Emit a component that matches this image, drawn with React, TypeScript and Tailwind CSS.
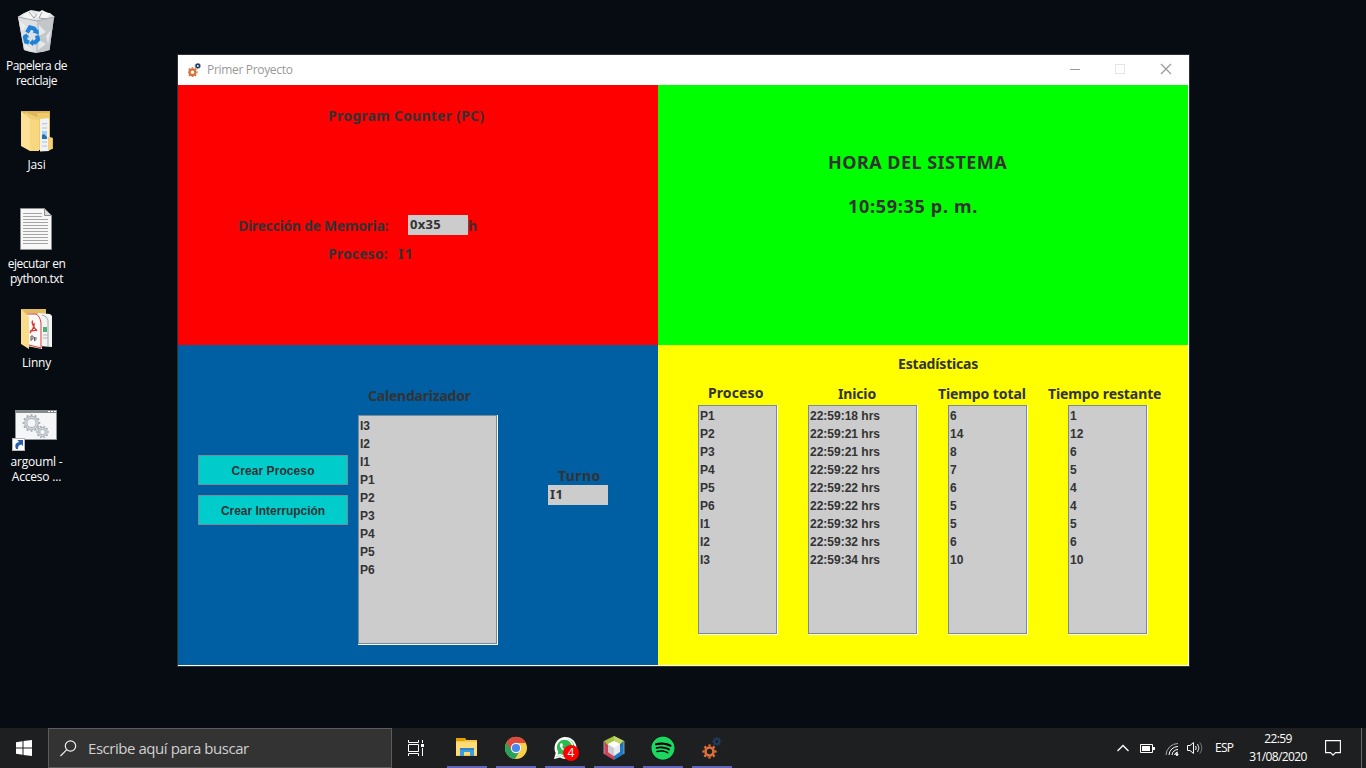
import React from "react";
import { FaSpotify, FaWhatsapp } from "react-icons/fa";

type GearProps = { cx: number; cy: number; r: number; color: string; teeth?: number; ring?: number; tooth?: number };

function Gear({ cx, cy, r, color, teeth = 8, ring = 2, tooth = 1.6 }: GearProps) {
  const unit = 100 / teeth / 2;
  return (
    <g fill="none" stroke={color}>
      <circle cx={cx} cy={cy} r={r} strokeWidth={ring} />
      <circle
        cx={cx}
        cy={cy}
        r={r + ring / 2 + tooth / 2 - 0.2}
        strokeWidth={tooth}
        pathLength={100}
        strokeDasharray={`${unit} ${unit}`}
        strokeDashoffset={unit / 2}
      />
    </g>
  );
}

function RecycleBin() {
  return (
    <svg width="48" height="48" viewBox="0 0 48 48">
      <path d="M6 9 L42 9 L37.500 42 Q24 47 12 42Z" fill="#c9cccf" />
      <path d="M5.500 9 L12 5 L19 2 L30 4 L38 5 L43 9 L36 13 L12 12Z" fill="#e3e5e6" />
      <path d="M6 9 L25 13 L24 45 L12 42Z" fill="#dddfe1" />
      <path d="M25 13 L42 9 L37.500 42 L24 45Z" fill="#c4c7ca" />
      <path d="M10 8l7-5 6 4 7-5 8 4-5 6-9-3-8 3z" fill="#f5f5f5" />
      <path d="M17 4l5 6 3-4M30 4l-3 6 8 1" stroke="#999da1" fill="none" />
      <path d="M27 17l7 7-7 4zM34 28l5-6-3 14zM27 32l7 4-8 6zM8 13l6 5-4 6zM12 36l9 6-8-1z" fill="#eef0f1" opacity=".8" />
      <path d="M6 9l19 4 17-4" stroke="#a8acb0" fill="none" />
      <g transform="translate(0 -1.500)">
        <g fill="none" stroke="#1c83d8" strokeWidth="4.200">
          <path d="M15 26l3-5 4 1 2 3" />
          <path d="M25 29l1 4-3 3h-3" />
          <path d="M17 36l-3-1-1-4 1-2" />
        </g>
        <path d="M20.500 26l6-3 .5 5zM21 32.500v7l-4-3zM10.500 30l4-3 3 4z" fill="#1c83d8" />
      </g>
    </svg>
  );
}

function FolderIcon() {
  return (
    <svg width="48" height="48" viewBox="0 0 48 48">
      <path d="M9 4H38V30l3 1V42H31z" fill="#dcb658" />
      <path d="M25 6H37V43H27z" fill="#f0c968" />
      <path d="M28 12l9-1v33l-9 .5z" fill="#eef2f5" />
      <path d="M30 17l5-.5M30 21h5M30 35h5M30 39h5" stroke="#b6c0c8" />
      <path d="M30 24h5v8h-5z" fill="#a6d0ec" />
      <path d="M30 28l2-1 3 3v2h-5z" fill="#246fae" />
      <path d="M13 5l14 6v33l-14-3z" fill="#f0ce76" />
      <path d="M36 30l4 1v11l-4 2z" fill="#f3cf78" />
      <path d="M9 4l9 8v32L9 39z" fill="#ffe196" />
      <path d="M18 12l9 1v31l-9 0z" fill="#f8d781" />
    </svg>
  );
}

function PdfFolder() {
  return (
    <svg width="48" height="48" viewBox="0 0 48 48">
      <path d="M9 4H34V36L9 39z" fill="#dfbc61" />
      <path d="M26 8l12 1 2 2v31l-13-1z" fill="#f2f3f3" />
      <path d="M30 10q5 1 6 5v26" stroke="#a8a9a3" fill="none" />
      <path d="M31 22h4v5h-4z" fill="#4bb078" />
      <path d="M31 30h5M31 33h5" stroke="#b6b6b6" />
      <path d="M15 8l11 1 4 8v27l-15-3z" fill="#fafafa" />
      <path d="M15 9h9q4 2 5 9v25l-12-3" stroke="#db3a32" fill="none" />
      <path d="M21 16c-2 0 0 6 4 10M22 18c1 4-2 7-4 10M18 26l7-1" stroke="#db3a32" strokeWidth="1.400" fill="none" />
      <path d="M19 31v5M19 31h2v3h-2M22.500 32v4q2-1 1.500-4" stroke="#5b5b5b" fill="none" />
      <path d="M9 4l8 8v32L9 39z" fill="#fbdc8b" />
    </svg>
  );
}

function TextFile() {
  return (
    <svg width="48" height="48" viewBox="0 0 48 48">
      <path d="M8.500 2.500h24l7 7v34h-31z" fill="#f7f7f7" stroke="#8d8d8d" />
      <path d="M32.500 2.500v7h7z" fill="#dadada" stroke="#8d8d8d" />
      <path d="M11 7.500h19M11 10.500h19M11 13.500h25M11 16.500h25M11 19.500h25M11 22.500h25M11 25.500h25M11 28.500h25M11 31.500h25M11 34.500h25M11 37.500h25" stroke="#a5a5a5" />
    </svg>
  );
}

function ShortcutIcon() {
  return (
    <svg width="48" height="48" viewBox="0 0 48 48">
      <rect x="3.500" y="6.500" width="41" height="29" fill="#f5f6f7" stroke="#8e9294" />
      <path d="M3 7.500h42" stroke="#858a8d" strokeWidth="3" />
      <path d="M36 7.500h2M39 7.500h2M42 7.500h2" stroke="#fff" />
      <Gear cx={19.5} cy={19} r={5.7} color="#a7aeb4" teeth={12} ring={3.2} tooth={1.7} />
      <Gear cx={30.500} cy={28} r={3.7} color="#a7aeb4" teeth={10} ring={2.8} tooth={1.4} />
      <circle cx="19.500" cy="19" r="5.700" fill="none" stroke="#d2d7db" strokeWidth="1.500" />
      <circle cx="30.500" cy="28" r="3.700" fill="none" stroke="#d2d7db" strokeWidth="1.300" />
      <rect x=".5" y="34.500" width="12" height="12" fill="#fff" stroke="#b7b7b7" />
      <path d="M4 45c-1.500-4-.5-6 3-7l-1.500-2H11v6l-1.500-1.500C7 41 6 42 6 45z" fill="#285fa8" />
    </svg>
  );
}

const desktopItems = [
  { icon: <RecycleBin />, lines: ["Papelera de", "reciclaje"], spacing: "tracking-[-0.5px]" },
  { icon: <FolderIcon />, lines: ["Jasi"], spacing: "tracking-[-0.1px]" },
  { icon: <TextFile />, lines: ["ejecutar en", "python.txt"], spacing: "tracking-[-0.45px]" },
  { icon: <PdfFolder />, lines: ["Linny"], spacing: "tracking-[-0.2px]" },
  { icon: <ShortcutIcon />, lines: ["argouml -", "Acceso ..."], spacing: "tracking-[-0.2px]" },
];

function Label({ children, className }: { children: React.ReactNode; className: string }) {
  return <div className={`whitespace-nowrap font-['Noto_Sans',sans-serif] font-bold text-[#333] ${className}`}>{children}</div>;
}

function ListBox({ items, className }: { items: string[]; className: string }) {
  return (
    <div className={`border-b border-r border-white ${className}`}>
      <div className="h-full border border-[#7a8a99] bg-[#ccc] pl-px pt-px">
        {items.map((t, i) => (
          <div key={i} className="h-[18px] whitespace-nowrap text-[12px] font-bold leading-[18px] text-[#333]">{t}</div>
        ))}
      </div>
    </div>
  );
}

const columns = [
  { title: "Proceso", head: "pl-[10px] -mt-px mb-px tracking-[0.1px]", box: "w-[80px]", gap: "w-[110px]", items: ["P1", "P2", "P3", "P4", "P5", "P6", "I1", "I2", "I3"] },
  { title: "Inicio", head: "pl-[30px] tracking-[-0.15px]", box: "w-[110px]", gap: "w-[140px]", items: ["22:59:18 hrs", "22:59:21 hrs", "22:59:21 hrs", "22:59:22 hrs", "22:59:22 hrs", "22:59:22 hrs", "22:59:32 hrs", "22:59:32 hrs", "22:59:34 hrs"] },
  { title: "Tiempo total", head: "-ml-[10px] tracking-[-0.1px]", box: "w-[80px]", gap: "w-[120px]", items: ["6", "14", "8", "7", "6", "5", "5", "6", "10"] },
  { title: "Tiempo restante", head: "-ml-[20px] tracking-[-0.1px]", box: "w-[80px]", gap: "w-[80px]", items: ["1", "12", "6", "5", "4", "4", "5", "6", "10"] },
];

function AppWindow() {
  return (
    <main className="flex h-[613px] w-[1013px] flex-col border border-[#2d3035] bg-white">
      <header className="flex h-[30px] shrink-0 items-center pl-[10px] pr-[17px]">
        <svg className="-mt-px" width="14" height="14" viewBox="0 0 14 14">
          <Gear cx={4.5} cy={9.3} r={2.9} color="#d9713a" ring={2.2} tooth={1.3} />
          <Gear cx={9.8} cy={2.9} r={1.7} color="#1c355e" ring={1.5} tooth={0.9} />
        </svg>
        <div className="-mt-px ml-[5px] whitespace-nowrap font-['Open_Sans',sans-serif] text-[12px] tracking-[-0.32px] text-[#999]">Primer Proyecto</div>
        <svg className="-mt-[2px] ml-auto" width="102" height="12" viewBox="0 0 102 12">
          <path d="M0 6.500h10" stroke="#999" />
          <rect x="45.500" y="1.500" width="9" height="9" fill="none" stroke="#e5e5e5" />
          <path d="M91 1l10 10M101 1L91 11" stroke="#999" strokeWidth="1.200" />
        </svg>
      </header>
      <div className="grid h-[580px] w-[1010px] grid-cols-[480px_530px] grid-rows-[260px_320px]">
        <section className="bg-[#f00] pt-[21px]">
          <Label className="pl-[150px] text-[14px] leading-[20px] tracking-[0.24px]">Program Counter (PC)</Label>
          <div className="mt-[89px] flex h-[20px]">
            <Label className="w-[170px] shrink-0 pl-[60px] pt-px text-[14px] leading-[20px] tracking-[-0.3px]">Dirección de Memoria:</Label>
            <Label className="ml-[60px] w-[60px] bg-[#ccc] pl-[2px] text-[13px] leading-[19px] tracking-[0.3px]">0x35</Label>
            <Label className="pt-px text-[14px] leading-[20px]">h</Label>
          </div>
          <div className="mt-[9px] flex pl-[150px]">
            <Label className="w-[70px] text-[14px] leading-[20px] tracking-[0.12px]">Proceso:</Label>
            <Label className="text-[14px] leading-[20px] tracking-[1px]">I1</Label>
          </div>
        </section>
        <section className="bg-[#0f0] pt-[65px]">
          <Label className="pl-[170px] text-[18px] leading-[24px] tracking-[0.47px]">HORA DEL SISTEMA</Label>
          <Label className="mt-[20px] pl-[190px] text-[18px] leading-[24px] tracking-[0.7px]">10:59:35 p. m.</Label>
        </section>
        <section className="flex bg-[#005fa3]">
          <div className="flex w-[180px] flex-col gap-[10px] pl-[20px] pt-[110px]">
            <button className="h-[30px] w-[150px] border border-[#7a8a99] bg-[#0cc] pt-[2px] text-[12px] font-bold tracking-[0.08px] text-[#333]">Crear Proceso</button>
            <button className="h-[30px] w-[150px] border border-[#7a8a99] bg-[#0cc] pt-[2px] text-[12px] font-bold tracking-[-0.03px] text-[#333]">Crear Interrupción</button>
          </div>
          <div className="w-[140px] pt-[41px]">
            <Label className="pl-[10px] text-[14px] leading-[20px] tracking-[-0.22px]">Calendarizador</Label>
            <ListBox items={["I3", "I2", "I1", "P1", "P2", "P3", "P4", "P5", "P6"]} className="mt-[9px] h-[230px] w-[140px]" />
          </div>
          <div className="pl-[50px] pt-[121px]">
            <Label className="pl-[10px] text-[14px] leading-[19px] tracking-[0.4px]">Turno</Label>
            <Label className="h-[20px] w-[60px] bg-[#ccc] pl-[2px] text-[13px] leading-[19px] tracking-[0.5px]">I1</Label>
          </div>
        </section>
        <section className="bg-[#ff0] pl-[40px] pt-[9px]">
          <Label className="pl-[200px] text-[14px] leading-[20px] tracking-[-0.18px]">Estadísticas</Label>
          <div className="mt-[9px] flex">
            {columns.map((c) => (
              <div key={c.title} className={c.gap}>
                <Label className={`h-[22px] text-[14px] leading-[21px] ${c.head}`}>{c.title}</Label>
                <ListBox items={c.items} className={`h-[230px] ${c.box}`} />
              </div>
            ))}
          </div>
        </section>
      </div>
    </main>
  );
}

function ExplorerIcon() {
  return (
    <svg width="24" height="24" viewBox="0 0 24 24">
      <path d="M1 2h9l1 2h11v16H1z" fill="#f7c64a" />
      <path d="M1 2h9l1 2-2 1H1z" fill="#e5a100" />
      <path d="M1 6h21v13H1z" fill="#ffdc78" />
      <path d="M5 12h14v8h-4v-4H9v4H5z" fill="#3d9be0" />
      <path d="M5 12h14v2H5z" fill="#2f83c7" />
    </svg>
  );
}

function ChromeIcon() {
  return (
    <svg width="24" height="24" viewBox="0 0 24 24">
      <circle cx="12" cy="12" r="11" fill="#f9cf47" />
      <path d="M12 12L2.500 6.500A11 11 0 0 0 11 23l5-8.500z" fill="#2aa15a" />
      <path d="M2.500 6.500A11 11 0 0 1 22 7H12L7 14z" fill="#dd4b3e" />
      <circle cx="12" cy="12" r="5.200" fill="#f4f4f4" />
      <circle cx="12" cy="12" r="4.100" fill="#4a87ee" />
    </svg>
  );
}

function WhatsAppIcon() {
  return (
    <span className="relative block h-6 w-6">
      <svg width="24" height="24" viewBox="0 0 24 24">
        <path d="M1 23l1.700-6A11 11 0 1 1 7 21.500z" fill="#fff" />
        <path d="M3 21l1.300-4.600A9.200 9.200 0 1 1 7.500 19.800z" fill="#28bd50" />
      </svg>
      <FaWhatsapp className="absolute left-[1px] top-px h-[21px] w-[21px] text-white" />
      <span className="absolute left-[10px] top-[9px] flex h-4 w-4 items-center justify-center rounded-full bg-[#f00] font-['Open_Sans',sans-serif] text-[12px] leading-4 text-white">4</span>
    </span>
  );
}

function CubeIcon() {
  return (
    <svg width="24" height="24" viewBox="0 0 24 24">
      <path d="M12 0l10 5-5 5-5-3-6 3-4-5z" fill="#a7c43e" />
      <path d="M12 0l10 5-5 3-5-4z" fill="#c2d56b" />
      <path d="M2 5l4 5v6l6 3v5L2 18z" fill="#cf4157" />
      <path d="M22 5l-4 5v6l-6 3v5l10-6z" fill="#1c7ac4" />
      <path d="M12 5l6 3v8l-6 4-6-4V8z" fill="#e8eaeb" />
      <path d="M6 8l6 4v8l-6-4z" fill="#c9cdd1" />
      <path d="M12 5l6 3-6 4-6-4z" fill="#fff" />
      <path d="M2 5v13M22 5v13" stroke="#a3b2c0" strokeWidth=".8" />
    </svg>
  );
}

const taskIcons = [
  <ExplorerIcon />,
  <ChromeIcon />,
  <WhatsAppIcon />,
  <CubeIcon />,
  <span className="flex h-6 w-6 items-center justify-center rounded-full bg-black"><FaSpotify className="h-6 w-6 text-[#1ed760]" /></span>,
  <svg width="24" height="24" viewBox="0 0 24 24">
    <Gear cx={9.5} cy={15.5} r={4} color="#df7139" ring={2.6} tooth={2} />
    <Gear cx={16.8} cy={5.5} r={2.5} color="#213e63" ring={1.7} tooth={1.4} />
  </svg>,
];

function Taskbar() {
  return (
    <footer className="flex h-[40px] w-full bg-[#1e1f20] font-['Open_Sans',sans-serif] text-white">
      <div className="flex w-[48px] items-center justify-center">
        <svg width="16" height="16" viewBox="0 0 16 16" fill="#fff">
          <path d="M0 2.200L6.500 1.300V7.500H0zM7.500 1.100L16 0V7.500H7.500zM0 8.500H6.500V14.700L0 13.800zM7.500 8.500H16V16L7.500 14.900z" />
        </svg>
      </div>
      <div className="flex w-[344px] items-center border border-[#5b5b5b] bg-[#333] pl-[11px]">
        <svg width="17" height="17" viewBox="0 0 17 17" fill="none" stroke="#f0f0f0" strokeWidth="1.200">
          <circle cx="10.500" cy="6" r="5.200" />
          <path d="M6.800 9.700L.5 16" />
        </svg>
        <span className="ml-[11px] whitespace-nowrap text-[15px] tracking-[-0.45px] text-[#d0d0d0]">Escribe aquí para buscar</span>
      </div>
      <div className="flex w-[50px] items-center pl-[16px]">
        <svg width="17" height="16" viewBox="0 0 17 16" fill="none" stroke="#fff">
          <path d="M.5 0v2.500h10V0M.5 16v-2.500h10V16M.5 4.500h10v7H.5zM14.500 0v3M14.500 8v8" />
          <path d="M13 4h3v3h-3z" fill="#fff" stroke="none" />
        </svg>
      </div>
      <div className="flex gap-[9px] pl-[5px]">
        {taskIcons.map((icon, i) => (
          <div key={i} className="flex h-[40px] w-[40px] items-center justify-center border-b-2 border-[#6266ba] pt-[2px]">{icon}</div>
        ))}
      </div>
      <div className="ml-auto flex items-center">
        <svg width="12" height="8" viewBox="0 0 12 8" fill="none" stroke="#fff" strokeWidth="1.300"><path d="M.5 7L6 1.500 11.500 7" /></svg>
        <svg className="ml-[11px]" width="15" height="9" viewBox="0 0 15 9">
          <path d="M.5.5h12v8H.5z" fill="none" stroke="#fff" />
          <path d="M2 2h8v5H2zM13 3h2v3h-2z" fill="#fff" />
        </svg>
        <svg className="ml-[10px] mt-px" width="14" height="14" viewBox="0 0 14 14" fill="none" stroke="#fff">
          <path d="M1 13A12 12 0 0 1 13 1.500" stroke="#aaa" />
          <path d="M4 13A9 9 0 0 1 13 4.500M7 13A6 6 0 0 1 13 7.500M9.500 13A4 4 0 0 1 13 10" />
          <circle cx="12" cy="12.500" r="1" fill="#fff" />
        </svg>
        <svg className="ml-[8px]" width="17" height="14" viewBox="0 0 17 14" fill="none" stroke="#fff">
          <path d="M.5 4.500h2.500L6.500 1.500v11L3 9.500H.5z" />
          <path d="M8.500 5q1.500 2 0 4" />
          <path d="M10.500 3q3 4 0 8" stroke="#ddd" />
          <path d="M12.800 1.500q4 5.500 0 11" stroke="#777" />
        </svg>
        <span className="ml-[11px] w-[20px] whitespace-nowrap text-[12px] tracking-[-0.7px]">ESP</span>
        <div className="ml-[13px] w-[60px] whitespace-nowrap text-center text-[12px] leading-[18px] tracking-[-0.6px]">
          <div>22:59</div>
          <div>31/08/2020</div>
        </div>
        <svg className="ml-[17px] mr-[20px]" width="16" height="16" viewBox="0 0 16 16" fill="none" stroke="#fff" strokeWidth="1.100">
          <path d="M.6.600h14.800v12H10.500L8 15.200 5.500 12.600H.6z" />
        </svg>
        <div className="h-[40px] w-[5px] border-l border-[#66676a]" />
      </div>
    </footer>
  );
}

export default function App() {
  return (
    <div className="flex h-[768px] w-[1366px] flex-col overflow-hidden bg-[#070b12] font-['Liberation_Sans',Arial,sans-serif]">
      <div className="flex h-[728px]">
        <nav className="flex w-[73px] flex-col pt-[7px]">
          {desktopItems.map((d) => (
            <div key={d.lines[0]} className="flex h-[99px] flex-col items-center">
              <div className="-ml-px pt-px">{d.icon}</div>
              <div className={`mt-[2px] whitespace-nowrap text-center font-['Open_Sans',sans-serif] text-[12px] leading-[15px] text-white ${d.spacing}`}>
                {d.lines.map((l) => <div key={l}>{l}</div>)}
              </div>
            </div>
          ))}
        </nav>
        <div className="pl-[104px] pt-[54px]"><AppWindow /></div>
      </div>
      <Taskbar />
    </div>
  );
}
